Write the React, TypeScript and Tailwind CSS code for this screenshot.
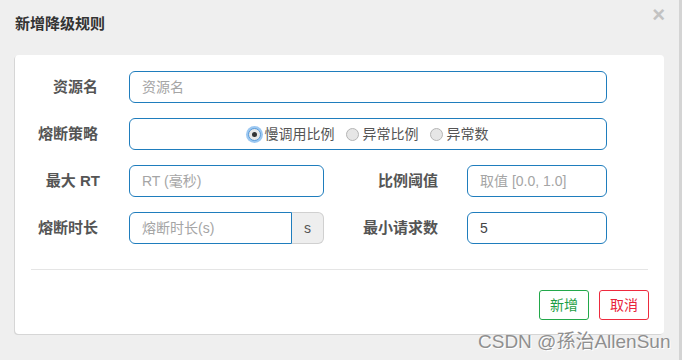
import React from 'react';

const font = "font-['Liberation_Sans','Noto_Sans_CJK_SC',sans-serif]";

const Label: React.FC<{ text: string; w: string }> = ({ text, w }) => (
  <div className={`${w} shrink-0 text-right text-[15px] font-bold text-[#555]`}>{text}</div>
);

const Input: React.FC<{ placeholder?: string; value?: string; w: string }> = ({ placeholder, value, w }) => (
  <div className={`${w} h-[32px] rounded-[6px] border border-[#1f7dbd] bg-white px-[12px] flex items-center text-[14px]`}>
    {value ? <span className="text-[#444]">{value}</span> : <span className="text-[#a5a5a5]">{placeholder}</span>}
  </div>
);

const Radio: React.FC<{ label: string; checked?: boolean }> = ({ label, checked }) => (
  <label className="flex items-center gap-[4px] text-[14px] text-[#555]">
    <span
      className={`flex h-[13px] w-[13px] items-center justify-center rounded-full border ${
        checked ? 'border-[#5a9bd8] bg-[#e8e8e8] ring-2 ring-[#9cc8f2]' : 'border-[#b5b5b5] bg-[#e6e6e6]'
      }`}
    >
      {checked && <span className="h-[5px] w-[5px] rounded-full bg-[#333]" />}
    </span>
    <span>{label}</span>
  </label>
);

export default function App() {
  return (
    <div className={`${font} flex h-[360px] w-[682px] overflow-hidden bg-[#efefef]`}>
      <div className="relative w-[679px]">
        {/* Header */}
        <div className="flex h-[55px] items-start justify-between pl-[15px] pr-[14px] pt-[13px]">
          <h4 className="text-[15px] font-bold text-[#333]">新增降级规则</h4>
          <button className="-mt-[9px] text-[22px] font-bold leading-none text-[#c2c2c2]">×</button>
        </div>

        {/* Body */}
        <div className="ml-[15px] h-[279px] w-[649px] rounded-[4px] bg-white pt-[16px] shadow-[-1px_1px_0_#d6d6d6]">
          <div className="flex flex-col gap-[15px]">
            <div className="flex items-center">
              <Label text="资源名" w="w-[83px]" />
              <div className="ml-[31px]">
                <Input placeholder="资源名" w="w-[478px]" />
              </div>
            </div>

            <div className="flex items-center">
              <Label text="熔断策略" w="w-[83px]" />
              <div className="ml-[31px] flex h-[32px] w-[478px] items-center justify-center gap-[11px] rounded-[6px] border border-[#1f7dbd] bg-white">
                <Radio label="慢调用比例" checked />
                <Radio label="异常比例" />
                <Radio label="异常数" />
              </div>
            </div>

            <div className="flex items-center">
              <Label text="最大 RT" w="w-[85px]" />
              <div className="ml-[29px]">
                <Input placeholder="RT (毫秒)" w="w-[195px]" />
              </div>
              <Label text="比例阈值" w="w-[114px]" />
              <div className="ml-[29px]">
                <Input placeholder="取值 [0.0, 1.0]" w="w-[140px]" />
              </div>
            </div>

            <div className="flex items-center">
              <Label text="熔断时长" w="w-[83px]" />
              <div className="ml-[31px] flex h-[32px] w-[195px]">
                <div className="flex flex-1 items-center rounded-l-[6px] border border-[#1f7dbd] bg-white px-[12px] text-[14px] text-[#a5a5a5]">
                  熔断时长(s)
                </div>
                <div className="flex w-[32px] items-center justify-center rounded-r-[6px] border border-l-0 border-[#d0d0d0] bg-[#eee] text-[14px] text-[#555]">
                  s
                </div>
              </div>
              <Label text="最小请求数" w="w-[114px]" />
              <div className="ml-[29px]">
                <Input value="5" w="w-[140px]" />
              </div>
            </div>
          </div>

          {/* Footer */}
          <div className="mx-[16px] mt-[25px] border-t border-[#e5e5e5]" />
          <div className="mt-[20px] flex justify-end gap-[10px] pr-[15px]">
            <button className="h-[30px] w-[50px] rounded-[3px] border border-[#22a84a] bg-white text-[14px] text-[#1e9e45]">
              新增
            </button>
            <button className="h-[30px] w-[50px] rounded-[3px] border border-[#ee2a3e] bg-white text-[14px] text-[#e8243a]">
              取消
            </button>
          </div>
        </div>

        {/* Watermark */}
        <div className="absolute left-[478px] top-[328px] text-[19px] text-[#8f8f8f] [text-shadow:1px_1px_0_#fff]">
          CSDN @孫治AllenSun
        </div>
      </div>
      <div className="w-[3px] bg-[#d4d4d4]" />
    </div>
  );
}
